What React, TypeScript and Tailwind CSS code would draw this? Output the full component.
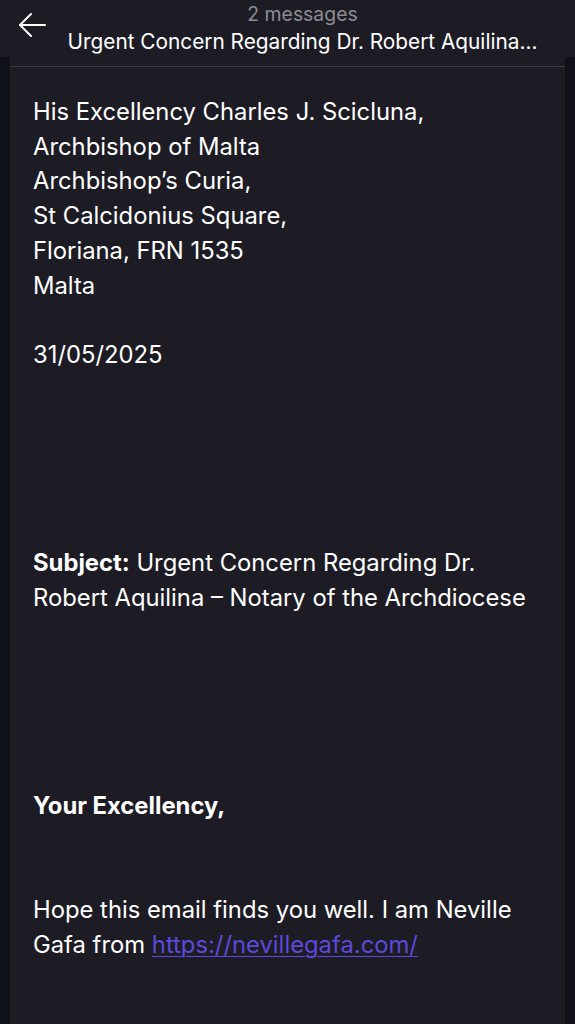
import React from "react";

const font = { fontFamily: "Inter, 'Noto Sans', sans-serif" };

const Blank = () => <div className="h-[34.7px]" />;

export default function App() {
  return (
    <div className="min-h-[1024px] w-full bg-[#0f1019] text-white" style={font}>
      {/* Header */}
      <header className="relative h-[57px] bg-[#1d1c24]">
        <button className="absolute left-[18px] top-[12px] text-white" aria-label="Back">
          <svg width="28" height="26" viewBox="0 0 28 26" fill="none" stroke="currentColor" strokeWidth="2" strokeLinecap="round" strokeLinejoin="round">
            <path d="M27 13H2" />
            <path d="M13 2L2 13l11 11" />
          </svg>
        </button>
        <div className="flex flex-col items-center pl-[30px] pt-[2px]">
          <div className="text-[19.4px] leading-[25px] text-[#8d8c94]">2 messages</div>
          <div className="text-[20.8px] leading-[29px] text-white">
            Urgent Concern Regarding Dr. Robert Aquilina...
          </div>
        </div>
      </header>

      {/* Message body */}
      <main className="mx-[10px] bg-[#1d1c24] pt-[9px] min-h-[967px]">
        <div className="h-px bg-[#3b3a42]" />
        <div className="px-[23px] pt-[28px] text-[23.8px] leading-[34.7px]">
          <div>His Excellency Charles J. Scicluna,</div>
          <div>Archbishop of Malta</div>
          <div>Archbishop’s Curia,</div>
          <div>St Calcidonius Square,</div>
          <div>Floriana, FRN 1535</div>
          <div>Malta</div>
          <Blank />
          <div>31/05/2025</div>
          <Blank />
          <Blank />
          <Blank />
          <Blank />
          <Blank />
          <p>
            <span className="font-bold">Subject:</span> Urgent Concern Regarding Dr.
            <br />
            Robert Aquilina – Notary of the Archdiocese
          </p>
          <Blank />
          <Blank />
          <Blank />
          <Blank />
          <Blank />
          <div className="font-bold">Your Excellency,</div>
          <Blank />
          <Blank />
          <p>
            Hope this email finds you well. I am Neville
            <br />
            Gafa from{" "}
            <a href="#" className="text-[#5b4adb] underline underline-offset-[3px] decoration-1">
              https://nevillegafa.com/
            </a>
          </p>
        </div>
      </main>
    </div>
  );
}
